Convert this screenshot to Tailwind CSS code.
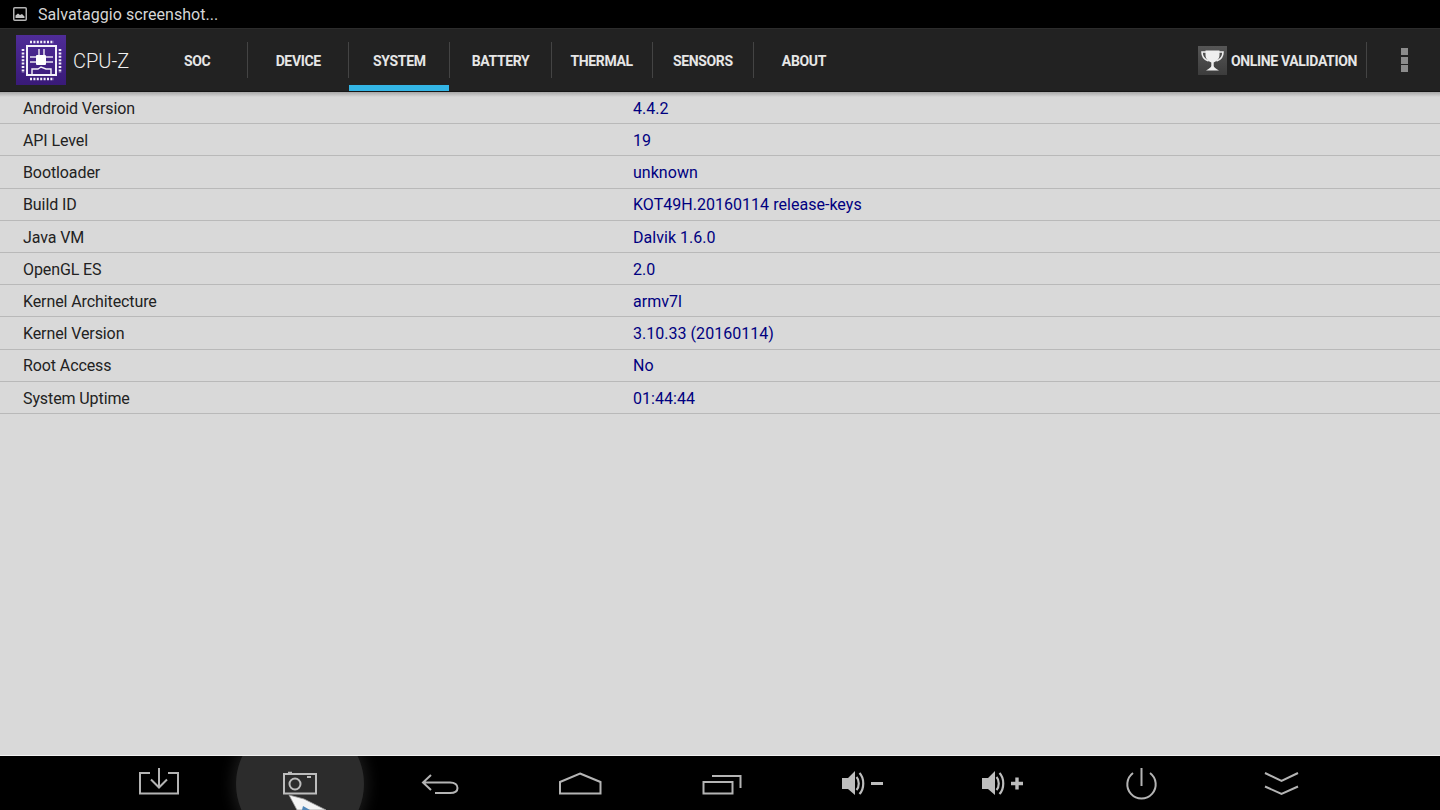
<!DOCTYPE html>
<html>
<head>
<meta charset="utf-8">
<script src="https://cdn.jsdelivr.net/npm/@tailwindcss/browser@4"></script>
</head>
<body class="m-0 bg-[#d9d9d9]">
<div class="w-[1440px] h-[810px] flex flex-col overflow-hidden font-['Roboto',sans-serif]">
  <!-- status bar -->
  <div class="h-[28px] bg-black flex items-center pl-[13px] gap-[11px] text-[#d6d6d6] text-[16px] tracking-[0.05px]">
    <svg width="14" height="14" viewBox="0 0 14 14" class="shrink-0"><rect x="0.75" y="0.75" width="12.5" height="12.5" rx="1" fill="none" stroke="#b4b4b4" stroke-width="1.5"/><path d="M2.5 11 L2.5 8.5 L5 6.5 L7 8 L9 7 L11.5 9.5 L11.5 11Z" fill="#c4c4c4"/></svg>
    <span class="pt-[2px]">Salvataggio screenshot...</span>
  </div>
  <!-- action bar -->
  <div class="h-[64px] bg-[#222222] border-t border-t-[#2c2c2c] border-b border-b-[#161616] flex items-stretch">
    <div class="w-[147px] flex items-center pl-[16px] gap-[7px] shrink-0">
      <svg width="50" height="50" viewBox="16 35 50 50" class="shrink-0">
        <defs><linearGradient id="lg" x1="0" y1="0" x2="0" y2="1"><stop offset="0" stop-color="#4f2c98"/><stop offset="1" stop-color="#391a78"/></linearGradient></defs>
        <rect x="16" y="35" width="50" height="50" fill="url(#lg)"/>
        <rect x="27" y="46" width="29" height="29" fill="none" stroke="#f4f1fa" stroke-width="2"/>
        <rect x="36" y="55" width="10" height="10" rx="1" fill="#ffffff"/>
        <g stroke="#f2eff9" stroke-width="2.6" stroke-dasharray="2 1.4" fill="none">
          <path d="M30 42 H54"/><path d="M30 79 H54"/><path d="M23 49 V73"/><path d="M60 49 V73"/>
        </g>
        <g stroke="#f4f1fa" stroke-width="1.4" fill="none">
          <path d="M39 49 V55"/><path d="M44 49 V55"/><path d="M30 57 H36"/><path d="M30 62 H36"/><path d="M46 57 H53"/><path d="M46 62 H53"/>
          <path d="M32 75 V69 H38 L41 67 L46 69 H51 V75"/>
        </g>
      </svg>
      <span class="text-[20px] font-light text-[#f0f0f0] pt-[2px]">CPU-Z</span>
    </div>
    <div class="flex items-stretch text-[14px] tracking-[-0.35px] font-bold text-[#e6e6e6] w-[708px] shrink-0">
      <div class="relative flex-1 flex items-center justify-center pt-[2px] pr-[1px] after:content-[''] after:absolute after:right-0 after:top-[13px] after:h-[36px] after:w-px after:bg-[#444444]">SOC</div>
      <div class="relative flex-1 flex items-center justify-center pt-[2px] pr-[1px] after:content-[''] after:absolute after:right-0 after:top-[13px] after:h-[36px] after:w-px after:bg-[#444444]">DEVICE</div>
      <div class="relative flex-1 flex items-center justify-center pt-[2px] pr-[1px] after:content-[''] after:absolute after:right-0 after:top-[13px] after:h-[36px] after:w-px after:bg-[#444444] before:content-[''] before:absolute before:left-0 before:right-px before:bottom-0 before:h-[6px] before:bg-[#33b5e5]">SYSTEM</div>
      <div class="relative flex-1 flex items-center justify-center pt-[2px] pr-[1px] after:content-[''] after:absolute after:right-0 after:top-[13px] after:h-[36px] after:w-px after:bg-[#444444]">BATTERY</div>
      <div class="relative flex-1 flex items-center justify-center pt-[2px] pr-[1px] after:content-[''] after:absolute after:right-0 after:top-[13px] after:h-[36px] after:w-px after:bg-[#444444]">THERMAL</div>
      <div class="relative flex-1 flex items-center justify-center pt-[2px] pr-[1px] after:content-[''] after:absolute after:right-0 after:top-[13px] after:h-[36px] after:w-px after:bg-[#444444]">SENSORS</div>
      <div class="flex-1 flex items-center justify-center pt-[2px] pr-[1px]">ABOUT</div>
    </div>
    <div class="flex-1 flex items-center justify-end">
      <svg width="29" height="29" viewBox="1198 45 29 29" class="mr-[4px] shrink-0">
        <defs><linearGradient id="tg" x1="0" y1="0" x2="0" y2="1"><stop offset="0" stop-color="#565656"/><stop offset="1" stop-color="#3c3c3c"/></linearGradient></defs>
        <rect x="1198" y="45" width="29" height="29" fill="url(#tg)"/>
        <path d="M1205.5 49.5 H1219.5 V54 C1219.5 58.5 1216 60.5 1213.7 61.5 V65 C1213.7 66.5 1216 67.5 1219 69.5 H1206 C1209 67.5 1211.3 66.5 1211.3 65 V61.5 C1209 60.5 1205.5 58.5 1205.5 54Z" fill="#efefef"/>
        <path d="M1206 51 H1202 C1202 55.5 1204 58.5 1208.5 60 M1219 51 H1223 C1223 55.5 1221 58.5 1216.5 60" fill="none" stroke="#efefef" stroke-width="1.6"/>
      </svg>
      <span class="text-[14px] tracking-[-0.35px] font-bold text-[#e6e6e6] whitespace-nowrap pt-[2px]">ONLINE VALIDATION</span>
      <div class="w-px h-[36px] bg-[#444444] ml-[9px]"></div>
      <div class="w-[73px] flex flex-col items-center gap-[1.5px] pl-px">
        <div class="w-[7px] h-[7px] bg-[#8c8c8c]"></div>
        <div class="w-[7px] h-[7px] bg-[#8c8c8c]"></div>
        <div class="w-[7px] h-[7px] bg-[#8c8c8c]"></div>
      </div>
    </div>
  </div>
  <!-- content -->
  <div class="flex-1 bg-[#d9d9d9] relative text-[16px]">
    <div class="absolute inset-x-0 top-0 h-[5px] bg-gradient-to-b from-[#a8a8a8] to-[#d9d9d9]"></div>
    <div class="relative">
      <div class="h-[32.2px] flex items-center pl-[23px] pt-[2.6px] border-b border-b-[#b9b9b9] text-[#222222]"><span class="w-[610px] tracking-[-0.1px]">Android Version</span><span class="text-[#000080] tracking-[0.03px]">4.4.2</span></div>
      <div class="h-[32.2px] flex items-center pl-[23px] pt-[2.6px] border-b border-b-[#b9b9b9] text-[#222222]"><span class="w-[610px] tracking-[-0.1px]">API Level</span><span class="text-[#000080] tracking-[0.03px]">19</span></div>
      <div class="h-[32.2px] flex items-center pl-[23px] pt-[2.6px] border-b border-b-[#b9b9b9] text-[#222222]"><span class="w-[610px] tracking-[-0.1px]">Bootloader</span><span class="text-[#000080] tracking-[0.03px]">unknown</span></div>
      <div class="h-[32.2px] flex items-center pl-[23px] pt-[2.6px] border-b border-b-[#b9b9b9] text-[#222222]"><span class="w-[610px] tracking-[-0.1px]">Build ID</span><span class="text-[#000080] tracking-[0.03px]">KOT49H.20160114 release-keys</span></div>
      <div class="h-[32.2px] flex items-center pl-[23px] pt-[2.6px] border-b border-b-[#b9b9b9] text-[#222222]"><span class="w-[610px] tracking-[-0.1px]">Java VM</span><span class="text-[#000080] tracking-[0.03px]">Dalvik 1.6.0</span></div>
      <div class="h-[32.2px] flex items-center pl-[23px] pt-[2.6px] border-b border-b-[#b9b9b9] text-[#222222]"><span class="w-[610px] tracking-[-0.1px]">OpenGL ES</span><span class="text-[#000080] tracking-[0.03px]">2.0</span></div>
      <div class="h-[32.2px] flex items-center pl-[23px] pt-[2.6px] border-b border-b-[#b9b9b9] text-[#222222]"><span class="w-[610px] tracking-[-0.1px]">Kernel Architecture</span><span class="text-[#000080] tracking-[0.03px]">armv7l</span></div>
      <div class="h-[32.2px] flex items-center pl-[23px] pt-[2.6px] border-b border-b-[#b9b9b9] text-[#222222]"><span class="w-[610px] tracking-[-0.1px]">Kernel Version</span><span class="text-[#000080] tracking-[0.03px]">3.10.33 (20160114)</span></div>
      <div class="h-[32.2px] flex items-center pl-[23px] pt-[2.6px] border-b border-b-[#b9b9b9] text-[#222222]"><span class="w-[610px] tracking-[-0.1px]">Root Access</span><span class="text-[#000080] tracking-[0.03px]">No</span></div>
      <div class="h-[32.2px] flex items-center pl-[23px] pt-[2.6px] border-b border-b-[#b9b9b9] text-[#222222]"><span class="w-[610px] tracking-[-0.1px]">System Uptime</span><span class="text-[#000080] tracking-[0.03px]">01:44:44</span></div>
    </div>
  </div>
  <!-- bottom nav -->
  <div class="h-[55px] bg-black border-t border-t-[#f2f2f2] relative overflow-hidden">
    <div class="absolute left-[236px] top-[-36px] w-[128px] h-[128px] rounded-full bg-[#2c2c2c] shadow-[0_0_14px_4px_#1a1a1a]"></div>
    <div class="relative grid grid-cols-[141px_140px_140px_141px_141px_140px_139px_140px_60px] pl-[129px] h-[54px]">
      <svg width="60" height="54" viewBox="129 756 60 54" fill="none" stroke="#b4b4b4" stroke-width="2"><path d="M150 773 H140 V793.5 H178 V773 H168"/><path d="M159 768 V787 M151 779.5 L159 787.5 L167 779.5"/></svg>
      <svg width="60" height="54" viewBox="270 756 60 54" fill="none" stroke="#bdbdbd" stroke-width="2"><rect x="284" y="774" width="32" height="19.5"/><circle cx="295" cy="784" r="5.5"/><path d="M307 777 H311" stroke-width="2"/><path d="M288 772.5 H292" stroke-width="1.5"/></svg>
      <svg width="60" height="54" viewBox="410 756 60 54" fill="none" stroke="#b4b4b4" stroke-width="2"><path d="M431 775 L423 782.5 L431 790 M423 782.5 H450 C455 782.5 457.5 785 457.5 788 C457.5 791 455 793 450 793 H435"/></svg>
      <svg width="60" height="54" viewBox="550 756 60 54" fill="none" stroke="#b4b4b4" stroke-width="2"><path d="M580 773.5 L600.5 782 V793.5 H560 V782Z"/></svg>
      <svg width="60" height="54" viewBox="691 756 60 54" fill="none" stroke="#b4b4b4" stroke-width="2"><rect x="703.5" y="782" width="29" height="11.5"/><path d="M712 776 H740.5 V788"/></svg>
      <svg width="60" height="54" viewBox="832 756 60 54"><path d="M842 778 H848 L855 771 V795 L848 789 H842Z" fill="#bdbdbd"/><path d="M856.5 777 C859.5 780 859.5 787 856.5 790 M859.5 773 C864.5 778 864.5 789 859.5 794" fill="none" stroke="#bdbdbd" stroke-width="2.2"/><path d="M871 783.5 H883" stroke="#bdbdbd" stroke-width="3"/></svg>
      <svg width="60" height="54" viewBox="972 756 60 54"><path d="M982 778 H988 L995 771 V795 L988 789 H982Z" fill="#bdbdbd"/><path d="M996.5 777 C999.5 780 999.5 787 996.5 790 M999.5 773 C1004.5 778 1004.5 789 999.5 794" fill="none" stroke="#bdbdbd" stroke-width="2.2"/><path d="M1011 783.5 H1023 M1017 777.5 V789.5" stroke="#bdbdbd" stroke-width="3.4"/></svg>
      <svg width="60" height="54" viewBox="1111 756 60 54" fill="none" stroke="#b4b4b4" stroke-width="2"><path d="M1141.5 768 V786"/><path d="M1133 773 A14.2 14.2 0 1 0 1150 773"/></svg>
      <svg width="60" height="54" viewBox="1251 756 60 54" fill="none" stroke="#b4b4b4" stroke-width="2"><path d="M1265 773 L1281.5 781 L1298 773"/><path d="M1265 786.5 L1281.5 794 L1298 786.5"/></svg>
    </div>
    <svg class="absolute left-[280px] top-[34px]" width="50" height="20" viewBox="280 790 50 20"><path d="M289 795 L297 810 H326 L304 799Z" fill="#f4f4f4" stroke="#9a9a9a" stroke-width="0.8"/><path d="M303 806 L310 810 H302Z" fill="#4f86b8"/></svg>
  </div>
</div>
</body>
</html>
